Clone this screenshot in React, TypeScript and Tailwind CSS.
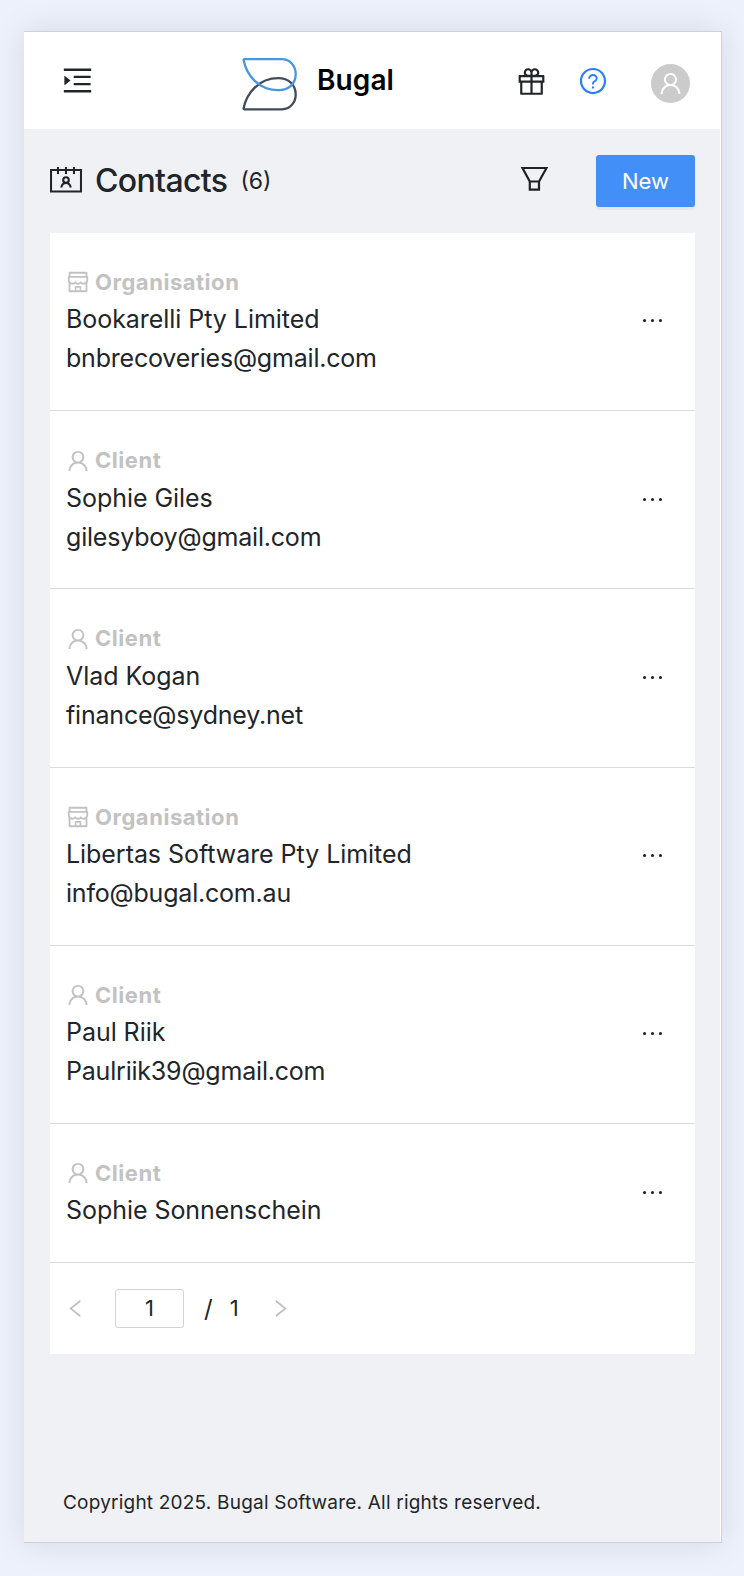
import React from "react";
import {
  AiOutlineEllipsis,
  AiOutlineGift,
  AiOutlineLeft,
  AiOutlineMenuUnfold,
  AiOutlineQuestionCircle,
  AiOutlineRight,
  AiOutlineShop,
  AiOutlineUser,
} from "react-icons/ai";

type Contact = { kind: "Organisation" | "Client"; name: string; email?: string };

const contacts: Contact[] = [
  { kind: "Organisation", name: "Bookarelli Pty Limited", email: "bnbrecoveries@gmail.com" },
  { kind: "Client", name: "Sophie Giles", email: "gilesyboy@gmail.com" },
  { kind: "Client", name: "Vlad Kogan", email: "finance@sydney.net" },
  { kind: "Organisation", name: "Libertas Software Pty Limited", email: "info@bugal.com.au" },
  { kind: "Client", name: "Paul Riik", email: "Paulriik39@gmail.com" },
  { kind: "Client", name: "Sophie Sonnenschein" },
];

function Logo() {
  return (
    <svg width="58" height="56" viewBox="0 0 58 56" fill="none" strokeWidth="2.3" strokeLinejoin="round">
      <path d="M3.6 52.3H41C48.700 52.300 54.700 46 54.700 37.500C54.700 27.500 47.500 21.200 37.300 21.200C17 21.200 5.500 37 2.700 50.900Q2.400 52.300 3.600 52.300Z" stroke="#414c58" />
      <path d="M3.6 2.2H41C48.700 2.200 54.700 8.500 54.700 17C54.700 27 47.500 33.200 37.300 33.200C17 33.200 5.500 17.500 2.700 3.600Q2.400 2.200 3.600 2.200Z" stroke="#4796e3" />
    </svg>
  );
}

function ContactsIcon() {
  return (
    <svg className="-mt-[3px]" width="32" height="28" viewBox="0 0 32 28" fill="none" stroke="#212529" strokeWidth="2.1">
      <path d="M1 4H31V25.500H1ZM8 1V8M16 1V8M24 1V8" />
      <circle cx="16" cy="14" r="2.800" />
      <path d="M11.200 21.500C11.800 18.800 13.500 17 16 17S20.200 18.800 20.800 21.500" />
    </svg>
  );
}

function FilterIcon() {
  return (
    <svg className="-mt-[4px]" width="28" height="26" viewBox="0 0 28 26" fill="none" stroke="#1f2021" strokeWidth="2.2">
      <path d="M2.500 2H26.500L19 15.500V23.700H9.800V15.500ZM9.800 15.500H19" />
    </svg>
  );
}

function Row({ contact }: { contact: Contact }) {
  const Icon = contact.kind === "Client" ? AiOutlineUser : AiOutlineShop;
  return (
    <li className="flex items-center justify-between border-b border-[#dadbdc] pt-[33.3px] pr-[28px] pb-[31.95px] pl-[16px]">
      <div>
        <div className="-mt-px mb-px flex h-[34px] items-center gap-[4px] text-[#c2c2c2]">
          <Icon className="-ml-px size-[26px]" />
          <span className="text-[22px] font-bold tracking-[0.530px]">{contact.kind}</span>
        </div>
        <div className="h-[39px] text-[25px] leading-[39px] tracking-[-0.050px]">{contact.name}</div>
        {contact.email && (
          <div className="h-[39px] text-[25px] leading-[39px] tracking-[-0.200px]">{contact.email}</div>
        )}
      </div>
      <AiOutlineEllipsis className="-mt-[3px] size-[29px]" />
    </li>
  );
}

export default function App() {
  return (
    <div className="h-[1576px] w-[744px] overflow-hidden bg-[#ecf1fb] pt-[31px] pl-[24px] font-['Inter',sans-serif] text-[#212529]">
      <div className="h-[1512px] w-[698px] border-t border-r border-b border-[#cfd1d6] bg-white pr-px shadow-[0_0_32px_rgba(0,0,0,0.100)]">
        <div className="flex h-full flex-col bg-[#f0f1f5]">
          <header className="flex h-[97px] shrink-0 items-center bg-white pl-[36px]">
            <AiOutlineMenuUnfold className="size-[35px]" />
            <div className="ml-[146px] flex items-center pt-[8px]">
              <Logo />
              <span className="-mt-[10px] ml-[18px] w-[80px] text-[28px] font-semibold tracking-[0.100px] text-black">Bugal</span>
            </div>
            <AiOutlineGift className="mt-[2px] ml-[118px] size-[33px]" />
            <AiOutlineQuestionCircle className="ml-[30px] size-[30px] text-[#2a7ef7]" />
            <div className="mt-[6px] ml-[43px] flex size-[39px] items-center justify-center rounded-full bg-[#cbcbcb] text-white">
              <AiOutlineUser className="size-[27px]" />
            </div>
          </header>

          <div className="flex h-[104px] shrink-0 items-center pr-[25px] pl-[26px]">
            <ContactsIcon />
            <h1 className="ml-[13px] text-[32px] font-medium tracking-[-0.650px]">Contacts</h1>
            <span className="ml-[13px] text-[23px]">(6)</span>
            <div className="ml-auto flex items-center">
              <FilterIcon />
              <button className="ml-[48px] h-[52px] w-[99px] rounded-[3px] bg-[#4290f7] text-[22px] text-white shadow-[0_3px_0_rgba(0,0,0,0.040)]">New</button>
            </div>
          </div>

          <main className="mr-[25px] ml-[26px] h-[1121px] shrink-0 bg-white">
            <ul>
              {contacts.map((c) => (
                <Row key={c.name} contact={c} />
              ))}
            </ul>
            <nav className="flex h-[91px] items-center pl-[14px] text-[22px]">
              <AiOutlineLeft className="size-[23px] text-[#bfbfbf]" />
              <div className="ml-[28px] flex h-[39px] w-[69px] items-center justify-center rounded-[3px] border-[1.500px] border-[#d3d3d3]">1</div>
              <span className="ml-[20px] text-[24px]">/</span>
              <span className="ml-[17px]">1</span>
              <AiOutlineRight className="ml-[30px] size-[23px] text-[#bfbfbf]" />
            </nav>
          </main>

          <footer className="mt-auto pb-[25px] pl-[39px] text-[19px] leading-[28px] tracking-[0.210px]">
            Copyright 2025. Bugal Software. All rights reserved.
          </footer>
        </div>
      </div>
    </div>
  );
}
